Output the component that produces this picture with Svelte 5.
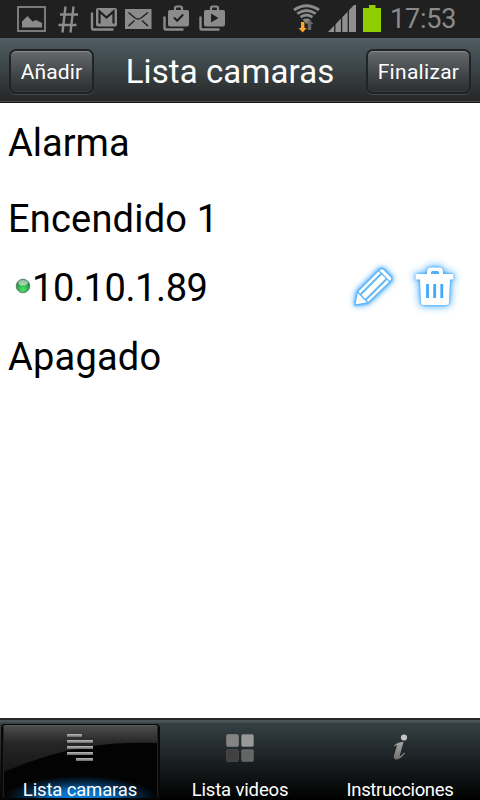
<script>
  let clock = '17:53';
  let title = 'Lista camaras';
  let activeTab = 'camaras';

  let rows = [
    { name: 'Alarma', cls: 'alarma' },
    { name: 'Encendido 1', cls: 'encendido' },
    { name: '10.10.1.89', cls: 'camera', online: true },
    { name: 'Apagado', cls: 'apagado' }
  ];

  const tabs = [
    { id: 'camaras', label: 'Lista camaras' },
    { id: 'videos', label: 'Lista videos' },
    { id: 'info', label: 'Instrucciones' }
  ];

  const removeRow = (row) => {
    rows = rows.filter((r) => r !== row);
  };
</script>

<div class="screen">
  <div class="status">
    <svg class="notifications" width="240" height="38" viewBox="0 0 240 38" fill="#8b8b8b">
      <!-- picture -->
      <rect x="18" y="7" width="27" height="24" fill="none" stroke="#858585" stroke-width="1.8" />
      <path d="M22 27.500V21.500l5.500-5.500 5 5.500 3.500-1.500L42 23v4.500z" />
      <!-- hash -->
      <path d="M65.500 6.500l-3 26M73.500 6.500l-3 26M60 14.500h18M58.500 25h18" fill="none" stroke="#8b8b8b" stroke-width="2.400" />
      <!-- gmail -->
      <path d="M92 12.500v15.500q0 1.500 1.500 1.500h20" fill="none" stroke="#8b8b8b" stroke-width="2.400" />
      <rect x="96" y="8" width="21" height="18.500" rx="2" />
      <path d="M99.500 23.500V11.500l7 6 7-6v12" fill="none" stroke="#202020" stroke-width="2.200" />
      <!-- mail -->
      <rect x="125" y="9" width="26.500" height="20" />
      <path d="M128.500 12.500l6.500 5.500q3 2 6 0l7-5.500M128.500 26l6-5.500M148 26l-6-5.500" fill="none" stroke="#202020" stroke-width="1.500" />
      <!-- store, check -->
      <path d="M164.500 16.500v11.500q0 1.500 1.500 1.500h17.500" fill="none" stroke="#8b8b8b" stroke-width="2.400" />
      <path d="M175 10V8.200q0-1.700 1.700-1.700h3.600q1.700 0 1.700 1.700V10" fill="none" stroke="#8b8b8b" stroke-width="2.200" />
      <rect x="168" y="10" width="21" height="16.500" rx="2" />
      <path d="M174 17.500l3.200 3.300 6-6.300" fill="none" stroke="#202020" stroke-width="2" />
      <!-- store, play -->
      <path d="M200.500 16.500v11.500q0 1.500 1.500 1.500h17.500" fill="none" stroke="#8b8b8b" stroke-width="2.400" />
      <path d="M211 10V8.200q0-1.700 1.700-1.700h3.600q1.700 0 1.700 1.700V10" fill="none" stroke="#8b8b8b" stroke-width="2.200" />
      <rect x="204" y="10" width="21" height="16.500" rx="2" />
      <path d="M211 13.500v9l7.500-4.500z" fill="#202020" />
    </svg>
    <svg class="signals" width="92" height="38" viewBox="290 0 92 38">
      <!-- wifi -->
      <g fill="none" stroke="#8b8b8b" stroke-width="2.800">
        <path d="M294 10q12.500-8.500 25 0" />
        <path d="M297.300 13.700q9.200-6.500 18.400 0" />
        <path d="M300.500 17.200q6-4.500 12 0" />
      </g>
      <path d="M302.500 19.800q4-2.700 8 0l-4 4z" fill="#8b8b8b" />
      <path d="M301 22h3.400v6h2.400l-4.200 4.500-4-4.500h2.400z" fill="#ffa42e" />
      <path d="M307.800 30h3.400v-6h2.300l-4-4.500-4 4.500h2.300z" fill="#686868" />
      <!-- signal -->
      <path d="M328 32L354 5h2v27z" fill="#8f8f8f" />
      <path d="M334.800 20v12M341.600 15v17M348.300 8v24" stroke="#202020" stroke-width="1.300" />
      <!-- battery -->
      <path d="M363 8h6V5h6.500v3h5.500v24h-18z" fill="#8fcf00" />
    </svg>
    <span class="clock">{clock}</span>
  </div>

  <header>
    <button class="btn add"><span>Añadir</span></button>
    <h1>{title}</h1>
    <button class="btn done"><span>Finalizar</span></button>
  </header>

  <main>
    {#each rows as row}
      <div class="row {row.cls}">
        {#if row.online}
          <svg class="led" width="16" height="16" viewBox="0 0 16 16">
            <defs>
              <radialGradient id="led" cx="50%" cy="75%" r="65%">
                <stop offset="0" stop-color="#4be36a" />
                <stop offset="0.600" stop-color="#2fae4b" />
                <stop offset="1" stop-color="#1f7736" />
              </radialGradient>
            </defs>
            <circle cx="8" cy="8" r="6.800" fill="url(#led)" stroke="#53775c" stroke-width="0.800" />
            <ellipse cx="8" cy="4.800" rx="4.800" ry="2.800" fill="#fff" opacity="0.550" />
          </svg>
        {/if}
        <span class="name">{row.name}</span>
        {#if row.online}
          <div class="actions">
            <button class="icon" aria-label="Editar">
              <svg width="60" height="62" viewBox="343 257 60 62">
                <path class="glow" d="M354.500 305.500l2.500-14L379.500 269q2-2 4.500 0l7.500 7.500q2 2 0 4.500L368 303.500z" fill="#fff" />
                <g fill="none" stroke="#5cb5f9" stroke-width="1.300" stroke-linejoin="round">
                  <path d="M354.800 305.200l2.500-13.500L379.500 269.500q2-2 4.500 0l7 7q2 2 0 4.500L368 303z" />
                  <path d="M378.500 270.500l11.500 11.500M357.500 291.800l10.500 11" />
                  <path d="M360.500 294.500l21-21M365.500 300l21-21" stroke-width="1.800" />
                </g>
              </svg>
            </button>
            <button class="icon" aria-label="Borrar" on:click={() => removeRow(row)}>
              <svg width="64" height="62" viewBox="403 257 64 62">
                <path class="glow strong" d="M416.500 274H427v-2.500q0-4 4-4h8q4 0 4 4v2.500h9.500q1 0 1 1v3.500q0 1-1 1H450l-1 23q-.2 2.500-3 2.500h-22q-2.800 0-3-2.500l-1-23h-3.500q-1 0-1-1V275q0-1 1-1z" fill="#fff" />
                <path d="M431 274v-1.300q0-1.700 1.700-1.700h4.600q1.700 0 1.700 1.700v1.300z" fill="#52b0fb" />
                <path d="M427.500 284v14M434.700 284v14M441.800 284v14" stroke="#42a8f8" stroke-width="2.800" />
              </svg>
            </button>
          </div>
        {/if}
      </div>
    {/each}
  </main>

  <nav>
    {#each tabs as tab}
      <button class="tab {tab.id}" class:active={activeTab === tab.id} on:click={() => (activeTab = tab.id)}>
        {#if activeTab === tab.id}
          <svg class="gloss" width="160" height="77" viewBox="0 0 160 77">
            <defs>
              <linearGradient id="gloss" x1="0" y1="3" x2="0" y2="50" gradientUnits="userSpaceOnUse">
                <stop offset="0" stop-color="#4d4d4d" />
                <stop offset="0.350" stop-color="#272727" />
                <stop offset="1" stop-color="#151515" />
              </linearGradient>
            </defs>
            <path d="M4 3h153v17C110 18 60 24 4 49z" fill="url(#gloss)" />
          </svg>
        {/if}
        <svg class="pic" width="30" height="30" viewBox="0 0 30 30">
          <defs>
            <linearGradient id="metal-{tab.id}" x1="0" y1="0" x2="0" y2="30" gradientUnits="userSpaceOnUse">
              <stop offset="0" stop-color="#c4c4c4" />
              <stop offset="1" stop-color="#686868" />
            </linearGradient>
            <linearGradient id="bar" x1="0" y1="0" x2="0" y2="1">
              <stop offset="0" stop-color="#bdbdbd" />
              <stop offset="1" stop-color="#686868" />
            </linearGradient>
          </defs>
          {#if tab.id === 'camaras'}
            <g fill="url(#bar)">
              <rect x="2" y="2" width="15" height="3" />
              <rect x="2" y="8" width="26" height="3" />
              <rect x="2" y="14" width="26" height="3" />
              <rect x="2" y="20" width="26" height="3" />
              <rect x="11" y="26" width="17" height="3" />
            </g>
          {:else if tab.id === 'videos'}
            <g stroke="#858585" stroke-opacity="0.600">
              <rect x="1.500" y="2.500" width="12" height="12" rx="1.500" fill="#848484" />
              <rect x="16.500" y="2.500" width="12" height="12" rx="1.500" fill="#999" />
              <rect x="1.500" y="17.500" width="12" height="12" rx="1.500" fill="#414141" stroke="#555" />
              <rect x="16.500" y="17.500" width="12" height="12" rx="1.500" fill="#656565" stroke="#666" />
            </g>
          {:else}
            <circle cx="19" cy="5.500" r="3.100" fill="#c5c5c5" />
            <path d="M9 13.500Q13.500 9.500 18.500 10L14.800 23.500q-.4 1.600 2.200-.8l2.200-2.200.8.800Q15 28 11 27.500q-3.200-.5-1.700-5.200L12 13.500q0-1.200-2.200.8z" fill="url(#metal-{tab.id})" />
          {/if}
        </svg>
        <span>{tab.label}</span>
      </button>
    {/each}
  </nav>
</div>

<style>
  :global(body) {
    background: #fff;
  }

  .screen {
    width: 480px;
    height: 800px;
    display: flex;
    flex-direction: column;
    overflow: hidden;
    background: #fff;
    font-family: Roboto, 'Liberation Sans', sans-serif;
    color: #000;
  }

  button {
    font-family: inherit;
    color: #fff;
    border: none;
    padding: 0;
    background: none;
    cursor: pointer;
  }

  svg {
    display: block;
    flex: none;
  }

  .status {
    height: 38px;
    flex: none;
    display: flex;
    background: #202020;
  }

  .signals {
    margin-left: 50px;
  }

  .clock {
    margin-left: 8px;
    font-size: 27px;
    line-height: 38px;
    color: #8b8b8b;
    letter-spacing: -0.2px;
  }

  header {
    height: 65px;
    flex: none;
    box-sizing: border-box;
    display: flex;
    justify-content: space-between;
    padding: 11px 9px 0;
    background: linear-gradient(#505d64, #3a4346 50%, #262626 98%);
    border-bottom: 1px solid #151515;
    box-shadow: inset 0 -1px #484b4c;
  }

  h1 {
    margin: 0;
    font-size: 33px;
    font-weight: 400;
    line-height: 45px;
    letter-spacing: 0.1px;
    color: #fff;
    white-space: nowrap;
  }

  .btn {
    box-sizing: border-box;
    height: 45px;
    border: 2px solid #202326;
    border-radius: 7px;
    background: linear-gradient(#666a6c, #454a4c 50%, #2b2d2e);
    box-shadow: inset 0 1px #8a8c8d, inset 0 -1px #3c3e3f, 0 1px #484b4d;
    font-size: 21px;
    line-height: 42px;
  }

  .add {
    width: 85px;
    letter-spacing: 0.1px;
  }

  .done {
    width: 105px;
    letter-spacing: 0.3px;
  }

  main {
    flex: 1;
    padding-top: 2px;
  }

  .row {
    height: 76px;
    display: flex;
    align-items: center;
    padding-left: 8px;
    font-size: 38px;
    line-height: 76px;
  }

  .encendido,
  .apagado {
    letter-spacing: 0.2px;
  }

  .camera {
    height: 62px;
    padding-left: 15px;
    line-height: 62px;
    letter-spacing: -0.4px;
  }

  .led {
    margin-top: -4px;
    margin-right: 1px;
  }

  .actions {
    display: flex;
    margin-left: auto;
    margin-right: 13px;
  }

  .icon {
    display: block;
  }

  .glow {
    filter: drop-shadow(0 0 1.5px #40a8ff) drop-shadow(0 0 3px #40a8ff);
  }

  .glow.strong {
    filter: drop-shadow(0 0 1.5px #2ba0ff) drop-shadow(0 0 4px #2ba0ff);
  }

  nav {
    height: 82px;
    flex: none;
    box-sizing: border-box;
    display: flex;
    border-top: 2px solid #24282b;
    background: linear-gradient(#4a5559 2px, #364044 3px, #20272a 40%, #080a0a 85%, #000);
  }

  .tab {
    position: relative;
    width: 160px;
    height: 80px;
    display: flex;
    flex-direction: column;
    align-items: center;
    padding-top: 12px;
    box-sizing: border-box;
    font-size: 18.5px;
    letter-spacing: -0.15px;
  }

  .tab.info {
    letter-spacing: -0.35px;
  }

  .tab span {
    position: relative;
    margin-top: 16px;
    line-height: 24px;
    white-space: nowrap;
  }

  .pic {
    position: relative;
  }

  .active::before {
    content: '';
    position: absolute;
    left: 1px;
    top: 4px;
    width: 159px;
    height: 76px;
    box-sizing: border-box;
    border: 2px solid #080808;
    border-bottom: none;
    border-radius: 4px 4px 0 0;
    background: #030303;
  }

  .active::after {
    content: '';
    position: absolute;
    left: 3px;
    top: 5px;
    width: 155px;
    height: 73px;
    border-radius: 3px;
    background: radial-gradient(ellipse 76px 22px at 50% 100%, #0a7dd8, #0870c4 35%, rgba(6, 80, 145, 0.6) 65%, transparent);
    box-shadow: inset 0 1px #5a5a5a, inset 1px 0 #222, inset -1px 0 #222;
  }

  .active .pic,
  .active span {
    z-index: 1;
  }

  .gloss {
    position: absolute;
    left: 0;
    top: 3px;
  }
</style>
